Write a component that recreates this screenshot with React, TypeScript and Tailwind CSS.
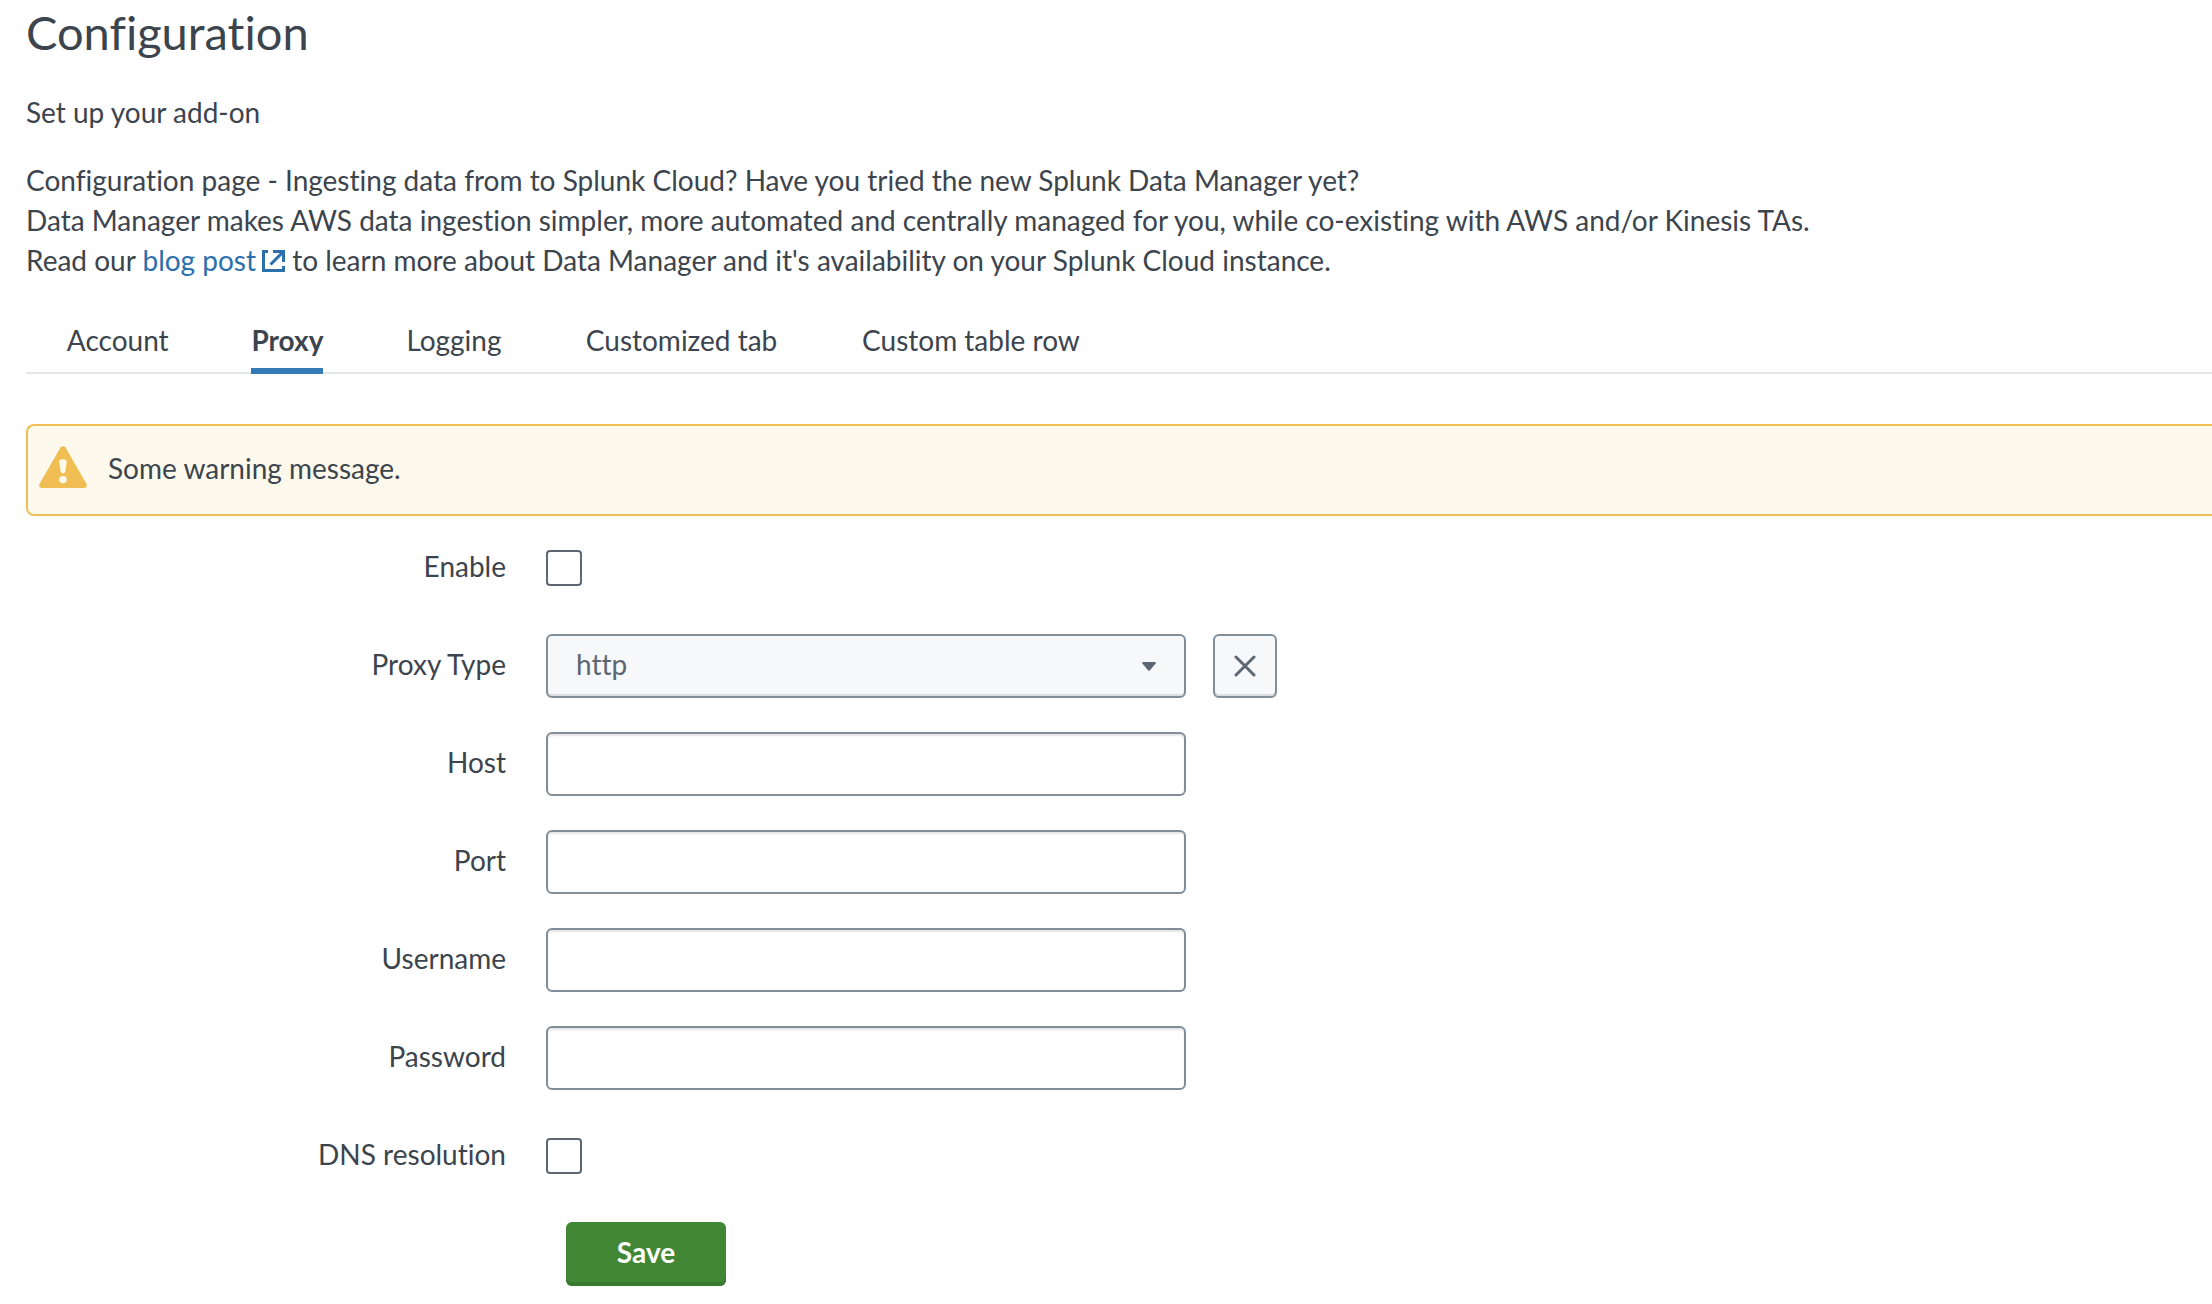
import { useState } from "react";
import type { ReactNode } from "react";

const TABS = ["Account", "Proxy", "Logging", "Customized tab", "Custom table row"];

function ExternalIcon() {
  return (
    <svg viewBox="0 0 23 22" className="ml-1.5 inline-block h-[22px] w-[23px] align-[-1px]" fill="none" stroke="currentColor" strokeWidth="3" aria-hidden="true">
      <path d="M6 1.5H1.5V20.5H21.5V16" />
      <path d="M11 1.5H21.5V12M21 2L8.5 14.5" />
    </svg>
  );
}

function WarningIcon() {
  return (
    <svg viewBox="0 0 48 42" className="h-[42px] w-12 shrink-0" aria-hidden="true">
      <path d="M21.7 1.3Q24 -1 26.3 1.3L47.3 37.4Q49 41.6 45.4 42H2.6Q-1 41.6 .7 37.4Z" fill="#f0be52" />
      <path d="M20.3 15.4Q20.6 13.2 24 13.2T27.7 15.4L26.4 25.6Q26 27.4 24 27.4T21.6 25.6Z" fill="#fdf9ec" />
      <ellipse cx="24" cy="33.6" rx="3.9" ry="3.6" fill="#fdf9ec" />
    </svg>
  );
}

function Row({ id, label, children }: { id: string; label: string; children: ReactNode }) {
  return (
    <div className="flex min-h-16 items-start">
      <label htmlFor={id} className="w-[480px] shrink-0 pt-2.5 text-right">
        {label}
      </label>
      <div className="ml-10 flex min-h-16 items-center gap-[27px]">{children}</div>
    </div>
  );
}

function TextField({ id, label, type = "text" }: { id: string; label: string; type?: string }) {
  return (
    <Row id={id} label={label}>
      <input
        id={id}
        type={type}
        className="h-16 w-[640px] rounded-md border-2 border-[#818d99] bg-white px-4 shadow-[inset_0_2px_2px_rgba(0,0,0,0.1)]"
      />
    </Row>
  );
}

function CheckField({ id, label }: { id: string; label: string }) {
  return (
    <Row id={id} label={label}>
      <input
        id={id}
        type="checkbox"
        className="size-9 appearance-none rounded border-2 border-[#5c6773] bg-white checked:bg-[#5c6773]"
      />
    </Row>
  );
}

export default function App() {
  const [active, setActive] = useState("Proxy");
  const [proxyType, setProxyType] = useState("http");

  return (
    <main className="min-h-screen overflow-x-hidden bg-white pb-4 pl-[26px] pt-2 font-['Lato',sans-serif] text-[28px] leading-10 text-[#3c444d] [font-variant-ligatures:none]">
      <h1 className="text-[47px] leading-[48px]">Configuration</h1>
      <p className="mt-9">Set up your add-on</p>
      <p className="mt-7">
        Configuration page - Ingesting data from to Splunk Cloud? Have you tried the new Splunk Data Manager yet?
        <br />
        Data Manager makes AWS data ingestion simpler, more automated and centrally managed for you, while co-existing
        with AWS and/or Kinesis TAs.
        <br />
        Read our{" "}
        <a href="#blog" className="text-[#2b70ad]">
          blog post
          <ExternalIcon />
        </a>{" "}
        to learn more about Data Manager and it's availability on your Splunk Cloud instance.
      </p>

      {/* The zero-height bold copy keeps each tab as wide as its selected state. */}
      <div role="tablist" className="mt-10 flex gap-[82px] border-b-2 border-[#e1e6eb] pl-10">
        {TABS.map((tab) => (
          <button
            key={tab}
            type="button"
            role="tab"
            aria-selected={tab === active}
            data-label={tab}
            onClick={() => setActive(tab)}
            className="-mb-0.5 border-b-6 border-transparent pb-2 after:invisible after:block after:h-0 after:overflow-hidden after:font-bold after:content-[attr(data-label)] aria-selected:border-[#337ab7] aria-selected:font-bold"
          >
            {tab}
          </button>
        ))}
      </div>

      <div role="alert" className="mt-[50px] flex gap-[21px] rounded-l-lg border-2 border-r-0 border-[#f0be52] bg-[#fdf9ec] pb-[26px] pl-[11px] pt-5">
        <WarningIcon />
        <p className="pt-0.5">Some warning message.</p>
      </div>

      <form className="mt-5 flex flex-col gap-[34px]" onSubmit={(e) => e.preventDefault()}>
        <CheckField id="enable" label="Enable" />
        <Row id="proxy-type" label="Proxy Type">
          <div className="relative">
            <select
              id="proxy-type"
              value={proxyType}
              onChange={(e) => setProxyType(e.target.value)}
              className="h-16 w-[640px] appearance-none rounded-md border-2 border-[#818d99] bg-[#f7f8fa] pb-1 pl-7 text-[#5c6773] shadow-[inset_0_-2px_0_#dcdfe2]"
            >
              <option value="http">http</option>
              <option value="socks4">socks4</option>
              <option value="socks5">socks5</option>
              <option value="" />
            </select>
            <svg viewBox="0 0 14 9" className="pointer-events-none absolute right-[30px] top-7 h-[9px] w-3.5" fill="#5c6773" aria-hidden="true">
              <path d="M1 0H13Q14.4 .4 13.6 1.6L8 8.3Q7 9.4 6 8.3L.4 1.6Q-.4 .4 1 0Z" />
            </svg>
          </div>
          <button
            type="button"
            aria-label="Clear"
            onClick={() => setProxyType("")}
            className="flex size-16 items-center justify-center rounded-md border-2 border-[#818d99] bg-[#f7f8fa] text-[#5c6773] shadow-[inset_0_-2px_0_#dcdfe2]"
          >
            <svg viewBox="0 0 22 22" className="size-[22px]" stroke="currentColor" strokeWidth="3" strokeLinecap="round" aria-hidden="true">
              <path d="M2 2L20 20M20 2L2 20" />
            </svg>
          </button>
        </Row>
        <TextField id="host" label="Host" />
        <TextField id="port" label="Port" />
        <TextField id="username" label="Username" />
        <TextField id="password" label="Password" type="password" />
        <CheckField id="dns" label="DNS resolution" />
        <button
          type="submit"
          className="ml-[540px] h-16 w-40 rounded-md bg-[#418735] pb-1 font-bold text-white shadow-[inset_0_-4px_0_#3a7a30]"
        >
          Save
        </button>
      </form>
    </main>
  );
}
